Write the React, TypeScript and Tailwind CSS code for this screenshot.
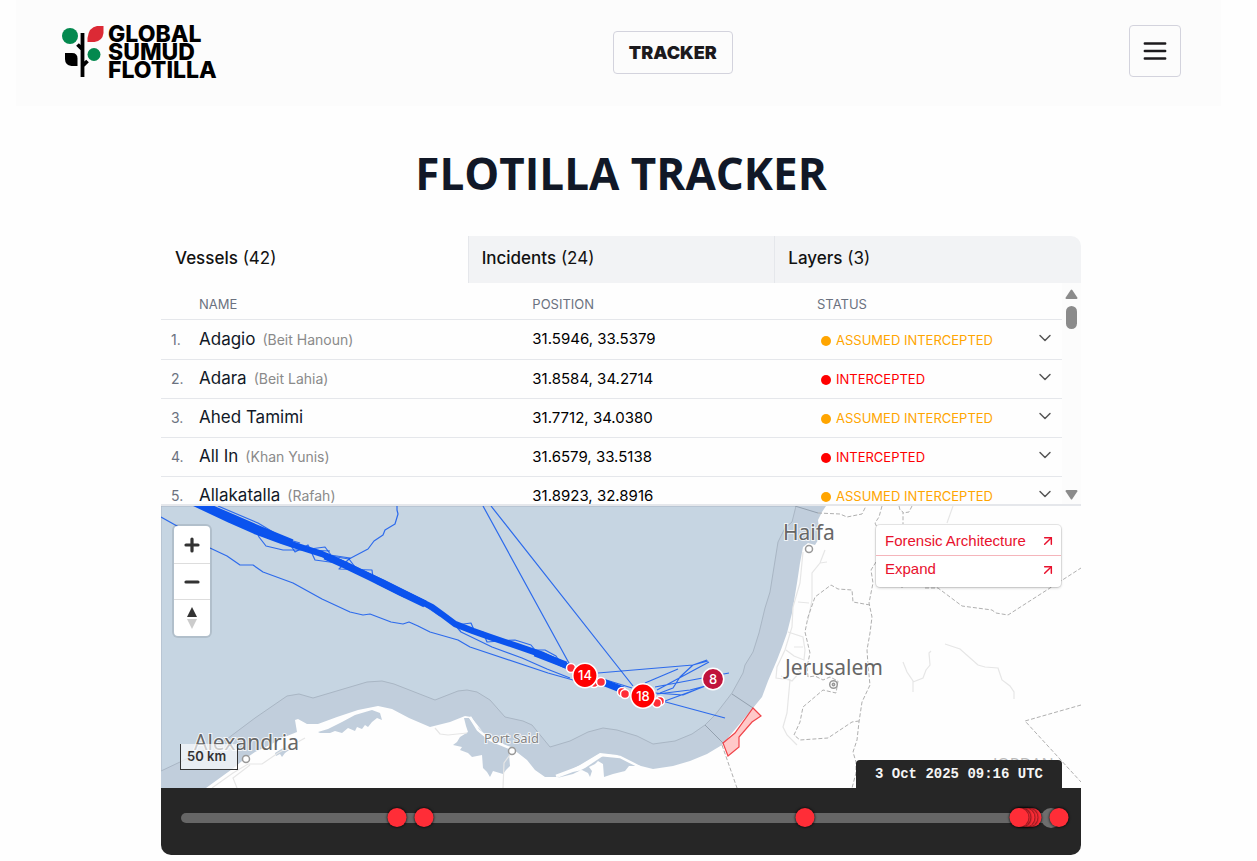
import { useState } from 'react';
import { ArrowUpRight, ChevronDown } from 'lucide-react';

interface Vessel {
  readonly name: string;
  readonly alias?: string;
  readonly position: string;
  readonly status: 'assumed' | 'intercepted';
}

const vessels: Vessel[] = [
  { name: 'Adagio', alias: 'Beit Hanoun', position: '31.5946, 33.5379', status: 'assumed' },
  { name: 'Adara', alias: 'Beit Lahia', position: '31.8584, 34.2714', status: 'intercepted' },
  { name: 'Ahed Tamimi', position: '31.7712, 34.0380', status: 'assumed' },
  { name: 'All In', alias: 'Khan Yunis', position: '31.6579, 33.5138', status: 'intercepted' },
  { name: 'Allakatalla', alias: 'Rafah', position: '31.8923, 32.8916', status: 'assumed' },
];

const tabs = [
  { label: 'Vessels', count: 42 },
  { label: 'Incidents', count: 24 },
  { label: 'Layers', count: 3 },
];

// Incident positions along the timeline, in percent
const incidents = [24.5, 27.6, 70.9, 96.7, 96.3, 95.9, 95.5, 95.2, 99.8];

const Logo = () => (
  <a href="#" className="flex items-start gap-1" aria-label="Global Sumud Flotilla">
    <svg width="42" height="54" viewBox="0 0 42 54" className="shrink-0">
      <circle cx="8" cy="11" r="8" fill="#04894f" />
      <path d="M25.500 17V13Q27 2 35 1h6.500v7q-1 8-9 9z" fill="#dc2a35" />
      <circle cx="32" cy="29.500" r="6.500" fill="#04894f" />
      <path d="M3 28h7q5.500 0 5.500 5.500v7.500h-6q-6.500-1-6.500-7z" fill="#000" />
      <path d="M20.500 8v44M15.500 19.500l5 5M25.500 36l-5 5" stroke="#000" strokeWidth="3.800" fill="none" />
    </svg>
    <span className="font-['Inter',sans-serif] text-[23px] leading-[18px] font-extrabold text-black">
      GLOBAL
      <br />
      SUMUD
      <br />
      FLOTILLA
    </span>
  </a>
);

const Header = () => (
  <header className="ml-4 mr-[21px] flex h-[106px] items-start justify-between bg-[#fcfcfc] pl-[46px] pr-10 pt-[25px]">
    <Logo />
    <a
      href="#tracker"
      className="mt-1.5 flex h-[43px] items-center rounded border border-[#d3d3dd] px-[15px] font-['Inter',sans-serif] text-lg font-black text-[#1c1a1d]"
    >
      TRACKER
    </a>
    <button
      type="button"
      aria-label="Menu"
      className="flex size-[52px] items-center justify-center rounded border border-[#d3d3dd]"
    >
      <svg width="24" height="24" viewBox="0 0 24 24" stroke="#1c1a1d" strokeWidth="2.400" strokeLinecap="round">
        <path d="M1.800 4.500h20.400M1.800 12h20.400M1.800 19.500h20.400" />
      </svg>
    </button>
  </header>
);

const StatusBadge = ({ status }: { status: Vessel['status'] }) => (
  <span
    className={`flex items-center gap-[5px] pl-1 pt-0.5 text-[13px] whitespace-nowrap ${
      status === 'intercepted' ? 'text-[#ff0000]' : 'text-[#ffa500]'
    }`}
  >
    <span className="size-2.5 rounded-full bg-current" />
    {status === 'intercepted' ? 'INTERCEPTED' : 'ASSUMED INTERCEPTED'}
  </span>
);

const VesselTable = () => (
  <div className="flex h-[223px] overflow-hidden border-b-2 border-[#e5e7eb]">
    <div className="min-w-0 flex-1">
      <table className="w-full table-fixed border-separate border-spacing-0 text-left">
        <thead>
          <tr className="text-[13px] text-[#6b7280] *:h-[37px] *:border-b *:border-[#e5e7eb] *:p-0 *:pt-2 *:font-normal">
            <th className="w-[38px]" aria-label="Number" />
            <th className="w-[37%]">NAME</th>
            <th>POSITION</th>
            <th className="w-[211px]">STATUS</th>
            <th className="w-[34px]" aria-label="Details" />
          </tr>
        </thead>
        <tbody>
          {vessels.map((vessel, index) => (
            <tr key={vessel.name} className="*:h-[39px] *:border-b *:border-[#e5e7eb] *:p-0 first:*:h-10">
              <td className="pl-2.5! text-sm text-[#6b7280]">{index + 1}.</td>
              <td className="truncate text-[17px] text-[#111827]">
                {vessel.name}
                {vessel.alias && <span className="pl-[7px] text-sm text-[#8a8a8a]">({vessel.alias})</span>}
              </td>
              <td className="text-[15px] text-black">{vessel.position}</td>
              <td>
                <StatusBadge status={vessel.status} />
              </td>
              <td>
                <button type="button" aria-label={`Show ${vessel.name}`} className="mx-auto mb-1 block">
                  <ChevronDown size={20} strokeWidth={1.75} color="#555" />
                </button>
              </td>
            </tr>
          ))}
        </tbody>
      </table>
    </div>
    {/* Scrollbar */}
    <div className="flex w-[19px] flex-col items-center bg-[#fcfcfc] pt-1.5 pb-1" aria-hidden="true">
      <svg width="13" height="11" viewBox="0 0 13 11" fill="#8b8b8b">
        <path d="M5.700 1q.8-1 1.600 0l5 7.500q.6 1.500-.8 1.500h-10q-1.400 0-.8-1.500z" />
      </svg>
      <div className="mt-1.5 h-[23px] w-[11px] rounded-full bg-[#8b8b8b]" />
      <svg width="13" height="11" viewBox="0 0 13 11" fill="#8b8b8b" className="mt-auto">
        <path d="M5.700 10q.8 1 1.600 0l5-7.500q.6-1.500-.8-1.500h-10q-1.400 0-.8 1.500z" />
      </svg>
    </div>
  </div>
);

const MapCanvas = () => (
  <svg
    viewBox="161 506 920 282"
    preserveAspectRatio="xMinYMin slice"
    className="block h-[282px] w-full"
    role="img"
    aria-label="Map of vessel tracks"
  >
    <rect x="161" y="506" width="920" height="282" fill="#fefefe" />
    {/* Coastal waters */}
    <path
      d="M161 506H826L822 512L818 520L820 537L815 545L808 543L803 547L800 563L797 583L792 613L787 633L782 647L777 660L768 681L762 697L753 708L722 745L707 754L690 761L673 766L653 769L637 765L617 755L600 753L580 765L557 777L545 777L535 770L527 760L518 753L512 748L496 742L483 732L471 717L465 716L450 722L430 727L409 718L392 709L378 706L358 710L337 717L318 724L307 724L298 719L295 720L297 732L282 738L270 745L255 752L242 761L235 767L206 788H161z"
      fill="#c1cedc"
    />
    <path
      d="M161 506H796L792 522L785 528L778 542L770 592L765 608L759 633L753 652L745 665L743 673L732 693L715 715L705 725L692 734L675 741L653 744L637 736L617 730L603 728L588 732L570 741L550 747L532 725L523 721L505 717L490 700L477 692L467 690L458 691L435 700L394 684L382 681L367 682L313 698L299 694L287 696L255 718L227 739L180 762L161 771z"
      fill="#c6d5e2"
      stroke="#a9b6c4"
    />
    {/* Lagoons */}
    <g fill="#c1cedc">
      <path d="M318 732L328 729L342 722L355 715L372 710L380 713L382 720L377 718L372 722L368 727L365 725L362 729L357 727L355 731L348 728L342 733L335 731L330 733L320 733z" />
      <path d="M275 753L283 748L288 750L292 748L285 753L282 757L280 754L276 756z" />
      <path d="M464 718L466 726L468 732L460 737L457 742L453 745L462 747L460 750L468 753L472 757L482 755L483 768L487 772L490 777L493 771L503 774L506 770L510 766L509 754L513 749L500 744L488 736L474 724L469 718z" />
      <path d="M557 778L573 772L582 770L588 773L590 777L592 771L589 767L595 764L598 761L603 764L604 777L613 774L625 771L629 766L638 766L628 760L617 756L603 756L585 768L573 774z" />
    </g>
    <g fill="none" stroke="#fefefe" strokeWidth="2.500">
      <path d="M470 717L478 730L490 740L510 748" />
      <path d="M556 776L580 767L600 755L620 757L640 767" />
    </g>
    {/* Roads */}
    <g fill="none" stroke="#e6e6e6" strokeWidth="1.200">
      <path d="M803 552L800 583L793 607L792 627L785 650L777 667L776 678L790 680L787 713L783 727L787 735L797 745" />
      <path d="M825 550L820 563L812 573L812 600L808 620M820 563L827 562M798 602L809 603M788 632L803 637L805 650L804 660L794 656L786 650M794 647L803 647M781 676L792 681L800 672L792 665" />
      <path d="M945 644L960 649L978 665L985 667L998 668L1002 680L1010 686L1014 692V699M903 662L907 672L913 681L913 692M913 682L923 678L926 670L930 665L929 653L931 651M953 506L947 523" />
      <path d="M212 788L233 773L248 764L262 764L278 753L305 738M237 788L233 778L250 765M435 728L440 734L448 735L467 733M503 788L504 763L512 752" />
    </g>
    {/* Borders */}
    <g fill="none" stroke="#b0b0b0" strokeDasharray="4 2">
      <path d="M818 513L840 514L847 517L862 514L866 506M882 506L879 517L875 523L880 534M899 506L900 510L903 512V524M912 506L909 512L903 513" />
      <path d="M902 560V588M876 562L871 570L873 583L869 603L872 617L870 633L867 650L868 665L870 685L862 702L859 722L857 740L853 752L856 762V773L852 788" />
      <path d="M870 605L853 602L852 590L838 589L831 585L815 597L808 617L805 632L810 653L807 667L808 677L815 676L823 680L830 677L838 681L836 693L823 690L803 707L800 722L794 735L800 740L828 738L852 722L859 721" />
      <path d="M925 588H938L962 606L992 610L996 613L1008 615L1050 588L1081 568M1081 705L1025 721L1081 782M722 745L737 788" />
    </g>
    <path d="M705 725L723 743M732 694L753 708M795 506L818 513" stroke="#93a0ae" fill="none" />
    <path
      d="M753 708L761 716L752 722L739 737V747L728 756L723 743L735 733z"
      fill="#ff9d9d"
      fillOpacity="0.550"
      stroke="#f0444a"
      strokeWidth="1.200"
    />
    {/* Vessel tracks */}
    <g fill="none" stroke="#0b53ee" strokeLinejoin="round">
      <path
        d="M194 503L230 520L255 531L282 541L300 547L322 554L342 563L358 571L382 582L408 595L432 607L443 615L455 624L473 631L490 637L517 646L543 655L569 667"
        strokeWidth="6.200"
      />
      <path d="M198 503L235 519L265 532L292 543" strokeWidth="7.500" />
      <path d="M325 556L345 565L370 577L400 592L425 604M535 653L566 665M600 681L623 690" strokeWidth="7" />
      <g strokeWidth="1.200" strokeOpacity="0.820">
        <path d="M161 517L177 526L210 548L227 556L240 565H253L263 572L293 583L322 599L350 612L363 615L370 614L391 622L403 624L409 622L418 626L430 632L458 640L470 647L548 673L573 680" />
        <path d="M455 625L461 632L492 647L522 658L547 669L570 678" />
        <path d="M218 506L258 523L283 538L300 543M257 532L259 537L266 546L283 550L305 550L330 551" />
        <path d="M397 506L397 510L398 514L395 524L385 530L383 535L374 541L368 549L349 559L355 567" />
        <path d="M288 541L295 552L308 545L315 560L337 563L325 547L310 549M330 555L350 558L339 569L372 570L373 578" />
        <path d="M330 556L349 559M376 583L404 597L415 599L440 616" />
        <path d="M456 625L471 623L474 630L483 632L487 642L500 641M495 641L515 640L531 645L535 650L545 650L556 656L560 662" />
        <path d="M483 506L570 665M491 506L633 686" />
        <path d="M598 673L693 665L708 661M645 683L678 669M655 687L729 673M657 690L709 662M660 693L673 688L680 677L693 665L707 660" />
        <path d="M655 693L683 695L705 686M665 701L703 687L713 682M657 694L690 690L713 684M662 701L725 718M603 679L632 688" />
      </g>
    </g>
    {/* Place names */}
    <g fill="#fff" stroke="#999" strokeWidth="1.500">
      <circle cx="246" cy="759" r="3.500" />
      <circle cx="512" cy="751" r="3.500" />
      <circle cx="809" cy="549" r="3.500" />
      <circle cx="833.500" cy="684.500" r="3.800" />
      <circle cx="833.500" cy="684.500" r="1.200" />
    </g>
    <g
      fill="#666"
      stroke="#fff"
      strokeWidth="2"
      strokeOpacity="0.800"
      paintOrder="stroke"
      className="font-['Noto_Sans',sans-serif] text-[21px]"
    >
      <text x="783" y="540">Haifa</text>
      <text x="785" y="675">Jerusalem</text>
      <text x="194" y="750">Alexandria</text>
      <text x="484" y="743" fill="#858585" className="text-[13px]">Port Said</text>
      <text x="993" y="770" fill="#bbb" className="text-base">JORDAN</text>
    </g>
    {/* Markers */}
    <g fill="#ff2d37" stroke="#fff" strokeWidth="1.500">
      <circle cx="594" cy="683" r="4.500" />
      <circle cx="571" cy="668" r="4.500" />
      <circle cx="601" cy="682" r="4.500" />
      <circle cx="622" cy="692" r="4.500" />
      <circle cx="625" cy="694" r="4.500" />
      <circle cx="660" cy="701" r="4.500" />
      <circle cx="657" cy="703" r="4.500" />
      <circle cx="585" cy="675.500" r="12.200" fill="#ff0000" />
      <circle cx="643" cy="696" r="12.200" fill="#ff0000" />
      <circle cx="713" cy="679" r="10.700" fill="#c0143c" />
    </g>
    <g fill="#fff" textAnchor="middle" className="font-['Inter',sans-serif] text-[13px] font-medium">
      <text x="585" y="680">14</text>
      <text x="643" y="701">18</text>
      <text x="713" y="684">8</text>
    </g>
  </svg>
);

const MapPanel = () => (
  <section className="relative overflow-hidden" aria-label="Map">
    <MapCanvas />

    <div className="absolute left-[13px] top-5 flex w-9 flex-col divide-y divide-[#ddd] rounded bg-white shadow-[0_0_0_2px_rgba(0,0,0,0.1)]">
      <button type="button" aria-label="Zoom in" className="flex h-[38px] items-center justify-center">
        <svg width="16" height="16" viewBox="0 0 16 16" stroke="#333" strokeWidth="3.200" strokeLinecap="round">
          <path d="M8 2v12M2 8h12" />
        </svg>
      </button>
      <button type="button" aria-label="Zoom out" className="flex h-9 items-center justify-center">
        <svg width="16" height="16" viewBox="0 0 16 16" stroke="#333" strokeWidth="3.200" strokeLinecap="round">
          <path d="M2 8h12" />
        </svg>
      </button>
      <button type="button" aria-label="Reset bearing" className="flex h-9 items-center justify-center">
        <svg width="12" height="22" viewBox="0 0 12 22">
          <path d="M6 0l5 10H1z" fill="#333" />
          <path d="M6 22l5-10H1z" fill="#ccc" />
        </svg>
      </button>
    </div>

    <nav className="absolute right-5 top-[19px] flex w-[185px] flex-col divide-y divide-[#f5b5bb] rounded bg-white font-['Liberation_Sans',Arial,sans-serif] text-[15px] text-[#e8112d] shadow-[0_0_0_1px_rgba(0,0,0,0.08),0_1px_3px_rgba(0,0,0,0.2)]">
      <a href="#forensic" className="flex h-[31px] items-center justify-between px-[9px] pt-0.5">
        Forensic Architecture
        <ArrowUpRight size={16} strokeWidth={2.2} className="-mr-1" />
      </a>
      <a href="#expand" className="flex h-[31px] items-center justify-between px-[9px] pb-1">
        Expand
        <ArrowUpRight size={16} strokeWidth={2.2} className="-mr-1" />
      </a>
    </nav>

    <div className="absolute bottom-[18px] left-[19px] h-[26px] w-[58px] border border-t-0 border-[#333] bg-white/65 pl-1.5 text-[13px] leading-6 font-semibold text-[#333]">
      50 km
    </div>

    <time className="absolute bottom-0 right-[19px] flex h-7 items-center rounded-t bg-[#262626] px-[19px] font-['Liberation_Mono',monospace] text-sm font-bold whitespace-pre text-[#f5f5f5]">
      3 Oct 2025 09:16 UTC
    </time>
  </section>
);

const Timeline = () => {
  const [time, setTime] = useState(100);

  return (
    <section className="h-[67px] rounded-b-[10px] bg-[#262626] px-5 pt-5" aria-label="Timeline">
      <div className="relative h-5">
        <input
          type="range"
          min={0}
          max={100}
          value={time}
          onChange={(e) => setTime(Number(e.target.value))}
          aria-label="Time"
          className="block h-[19px] w-full appearance-none bg-transparent [&::-webkit-slider-runnable-track]:h-2.5 [&::-webkit-slider-runnable-track]:rounded-full [&::-webkit-slider-runnable-track]:bg-[#666] [&::-webkit-slider-thumb]:-mt-[5px] [&::-webkit-slider-thumb]:size-5 [&::-webkit-slider-thumb]:appearance-none [&::-webkit-slider-thumb]:rounded-full [&::-webkit-slider-thumb]:bg-[#6e6e6e]"
        />
        {incidents.map((left) => (
          <button
            key={left}
            type="button"
            aria-label="Incident"
            onClick={() => setTime(left)}
            className="absolute top-0 size-[19px] -translate-x-1/2 rounded-full bg-[#ff2d37] shadow-[0_0_2px_1px_rgba(0,0,0,0.5)]"
            style={{ left: `${left}%` }}
          />
        ))}
      </div>
    </section>
  );
};

export default function App() {
  const [activeTab, setActiveTab] = useState(0);

  return (
    <div className="min-h-screen bg-[#fefefe] pr-[15px] font-['Inter',sans-serif]">
      <Header />
      <main id="tracker" className="mx-auto w-full max-w-[920px]">
        <h1 className="pt-9 pb-8 text-center font-['Open_Sans',sans-serif] text-[44px] leading-[62px] font-bold text-[#111827]">
          FLOTILLA TRACKER
        </h1>

        <div className="grid grid-cols-3 overflow-hidden rounded-t-[10px]" role="tablist">
          {tabs.map((tab, index) => (
            <button
              key={tab.label}
              type="button"
              role="tab"
              aria-selected={activeTab === index}
              onClick={() => setActiveTab(index)}
              className={`h-[47px] border-l pb-0.5 pl-[13px] text-left text-[17px] text-[#111] ${
                activeTab === index ? 'border-transparent' : 'border-[#e5e7eb] bg-[#f2f3f5]'
              }`}
            >
              <span className="font-medium">{tab.label}</span> <span>({tab.count})</span>
            </button>
          ))}
        </div>

        <VesselTable />
        <MapPanel />
        <Timeline />
      </main>
    </div>
  );
}
